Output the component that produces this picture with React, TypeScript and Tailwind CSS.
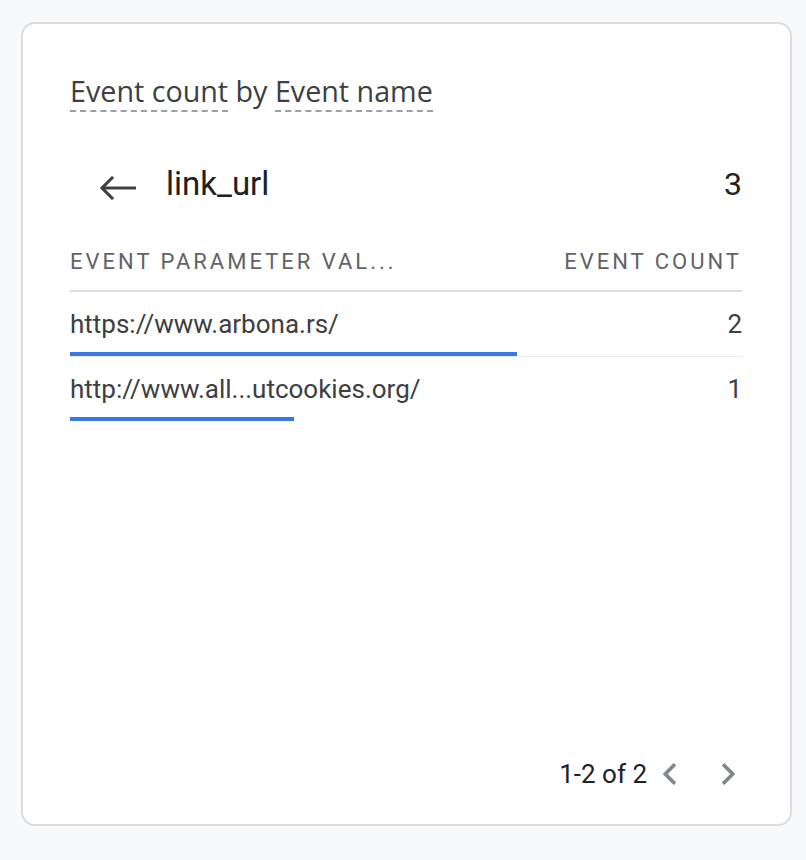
import React from 'react';

const rows = [
  { label: 'https://www.arbona.rs/', value: 2 },
  { label: 'http://www.all...utcookies.org/', value: 1 },
];

function ChevronLeft() {
  return (
    <svg width="44" height="44" viewBox="0 0 24 24" fill="#80868b">
      <path d="M15.41 7.41L14 6l-6 6 6 6 1.41-1.41L10.83 12z" />
    </svg>
  );
}

function ChevronRight() {
  return (
    <svg width="44" height="44" viewBox="0 0 24 24" fill="#80868b">
      <path d="M10 6L8.59 7.41 13.17 12l-4.58 4.59L10 18l6-6z" />
    </svg>
  );
}

export default function App() {
  const max = Math.max(...rows.map(r => r.value));

  return (
    <div className="w-[806px] h-[860px] bg-[#f8f9fa] pt-[22px] pl-[21px]" style={{ fontFamily: 'Roboto, sans-serif' }}>
      <div className="w-[771px] h-[804px] bg-white border-2 border-[#dadce0] rounded-[14px] pl-[47px] pr-[48px] pt-[50px] pb-[28px] flex flex-col">
        <div className="text-[28.7px] leading-[34px] text-[#3c4043] whitespace-pre" style={{ fontFamily: '"Open Sans", sans-serif' }}>
          <span className="border-b-2 border-dashed border-[#9aa0a6]">Event count</span>
          <span> by </span>
          <span className="border-b-2 border-dashed border-[#9aa0a6]">Event name</span>
        </div>

        <div className="flex items-center mt-[56px] h-[40px]">
          <svg width="40" height="24" viewBox="0 0 40 24" className="ml-[29px] mt-[8px]" fill="none" stroke="#3c4043" strokeWidth="3">
            <path d="M3 12h34" />
            <path d="M13 2L3 12l10 10" strokeLinecap="square" />
          </svg>
          <span className="ml-[27px] text-[33px] text-[#202124]">link_url</span>
          <span className="ml-auto text-[32px] text-[#202124]">3</span>
        </div>

        <div className="flex justify-between mt-[44px] pb-[14px] border-b-2 border-[#dadce0] text-[22px] leading-[28px] tracking-[3px] text-[#5f6368]">
          <span>EVENT PARAMETER VAL...</span>
          <span>EVENT COUNT</span>
        </div>

        {rows.map((r, i) => (
          <div key={r.label} className={`pt-[16px] ${i === 0 ? 'border-b border-[#e8eaed]' : ''}`}>
            <div className="flex justify-between text-[26px] leading-[32px] text-[#3c4043]">
              <span>{r.label}</span>
              <span>{r.value}</span>
            </div>
            <div className="mt-[12px] h-[4px] bg-[#3b78e7]" style={{ width: `${(r.value / max) * 447}px` }} />
          </div>
        ))}

        <div className="mt-auto flex items-center justify-end -mr-[8px]">
          <span className="text-[26px] text-[#202124] mr-[1px]">1-2 of 2</span>
          <ChevronLeft />
          <span className="w-[14px]" />
          <ChevronRight />
        </div>
      </div>
    </div>
  );
}
